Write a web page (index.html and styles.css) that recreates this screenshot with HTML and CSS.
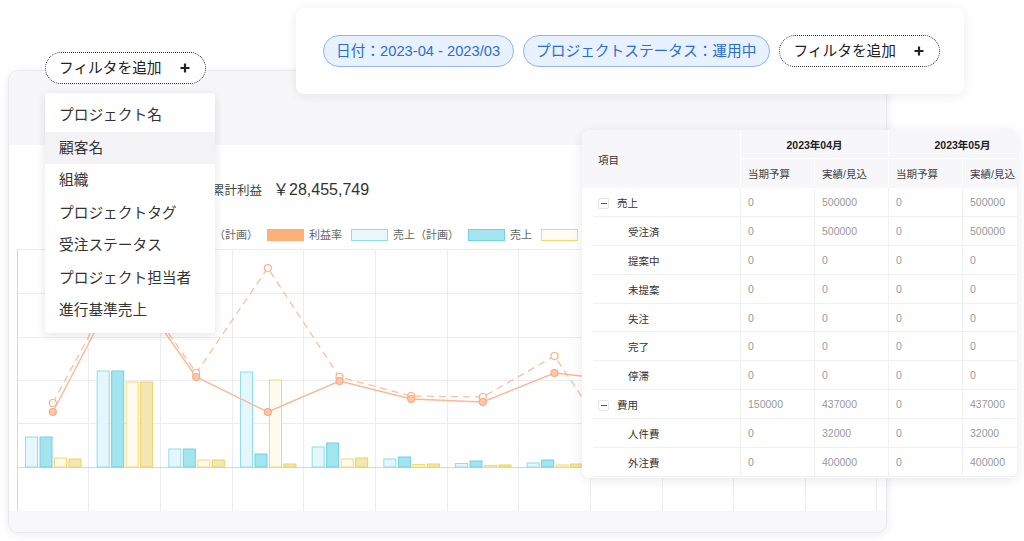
FILE: index.html
```html
<!DOCTYPE html>
<html lang="ja">
<head>
<meta charset="utf-8">
<title>レポート</title>
<link rel="stylesheet" href="styles.css">
</head>
<body>
<div class="stage">

  <section class="report">
    <div class="report-head"></div>
    <div class="summary"><span class="summary-label">累計利益</span><span class="summary-value">￥28,455,749</span></div>
    <ul class="legend">
      <li><span class="sw sw-plan-rate"></span>利益率（計画）</li>
      <li><span class="sw sw-rate"></span>利益率</li>
      <li><span class="sw sw-sales-plan"></span>売上（計画）</li>
      <li><span class="sw sw-sales"></span>売上</li>
      <li><span class="sw sw-cost-plan"></span></li>
    </ul>
    <svg class="chart" viewBox="0 0 860 262" width="860" height="262">
      <path class="gl" d="M0 0.5H860M0 44.5H860M0 88.5H860M0 131.5H860M0 174.5H860"/>
      <path class="gl" d="M71.5 0V262M143.5 0V262M215.5 0V262M286.5 0V262M358.5 0V262M430.5 0V262M501.5 0V262M573.5 0V262M645.5 0V262M716.5 0V262M788.5 0V262M859.5 0V262"/>
      <path class="axis" d="M0.5 0V262M0 218.5H860"/>

      <g transform="translate(0,0)">
        <rect class="b1" x="8.5" y="188" width="12" height="30"/>
        <rect class="b2" x="23" y="188" width="12" height="30"/>
        <rect class="b3" x="37.5" y="209" width="12" height="9"/>
        <rect class="b4" x="52" y="210" width="12" height="8"/>
      </g>
      <g transform="translate(71.67,0)">
        <rect class="b1" x="8.5" y="122" width="12" height="96"/>
        <rect class="b2" x="23" y="122" width="12" height="96"/>
        <rect class="b3" x="37.5" y="133" width="12" height="85"/>
        <rect class="b4" x="52" y="133" width="12" height="85"/>
      </g>
      <g transform="translate(143.33,0)">
        <rect class="b1" x="8.5" y="200" width="12" height="18"/>
        <rect class="b2" x="23" y="200" width="12" height="18"/>
        <rect class="b3" x="37.5" y="211" width="12" height="7"/>
        <rect class="b4" x="52" y="211" width="12" height="7"/>
      </g>
      <g transform="translate(215,0)">
        <rect class="b1" x="8.5" y="123" width="12" height="95"/>
        <rect class="b2" x="23" y="205" width="12" height="13"/>
        <rect class="b3" x="37.5" y="131" width="12" height="87"/>
        <rect class="b4" x="52" y="215" width="12" height="3"/>
      </g>
      <g transform="translate(286.67,0)">
        <rect class="b1" x="8.5" y="198" width="12" height="20"/>
        <rect class="b2" x="23" y="194" width="12" height="24"/>
        <rect class="b3" x="37.5" y="210" width="12" height="8"/>
        <rect class="b4" x="52" y="209" width="12" height="9"/>
      </g>
      <g transform="translate(358.33,0)">
        <rect class="b1" x="8.5" y="210" width="12" height="8"/>
        <rect class="b2" x="23" y="208" width="12" height="10"/>
        <rect class="b3" x="37.5" y="215.5" width="12" height="2.5"/>
        <rect class="b4" x="52" y="215" width="12" height="3"/>
      </g>
      <g transform="translate(430,0)">
        <rect class="b1" x="8.5" y="214.5" width="12" height="3.5"/>
        <rect class="b2" x="23" y="212" width="12" height="6"/>
        <rect class="b3" x="37.5" y="216.5" width="12" height="1.5"/>
        <rect class="b4" x="52" y="216" width="12" height="2"/>
      </g>
      <g transform="translate(501.67,0)">
        <rect class="b1" x="8.5" y="214" width="12" height="4"/>
        <rect class="b2" x="23" y="211" width="12" height="7"/>
        <rect class="b3" x="37.5" y="216" width="12" height="2"/>
        <rect class="b4" x="52" y="215" width="12" height="3"/>
      </g>

      <polyline class="line-plan" points="35.8,154 107.5,21 179.2,124 250.8,19 322.5,128 394.2,147 465.8,148 537.5,107 609.2,214 680.8,150 752.5,140 824.2,135"/>
      <polyline class="line-actual" points="35.8,163 107.5,26 179.2,128 250.8,163 322.5,132 394.2,150 465.8,153 537.5,124 609.2,132 680.8,140 752.5,136 824.2,130"/>

      <g class="dot-plan">
        <circle cx="35.8" cy="154" r="3.5"/><circle cx="107.5" cy="21" r="3.5"/><circle cx="179.2" cy="124" r="3.5"/><circle cx="250.8" cy="19" r="3.5"/><circle cx="322.5" cy="128" r="3.5"/><circle cx="394.2" cy="147" r="3.5"/><circle cx="465.8" cy="148" r="3.5"/><circle cx="537.5" cy="107" r="3.5"/>
      </g>
      <g class="dot-actual">
        <circle cx="35.8" cy="163" r="3.5"/><circle cx="107.5" cy="26" r="3.5"/><circle cx="179.2" cy="128" r="3.5"/><circle cx="250.8" cy="163" r="3.5"/><circle cx="322.5" cy="132" r="3.5"/><circle cx="394.2" cy="150" r="3.5"/><circle cx="465.8" cy="153" r="3.5"/><circle cx="537.5" cy="124" r="3.5"/>
      </g>
    </svg>
    <div class="report-foot"></div>
  </section>

  <button class="add-filter add-filter-left" type="button">フィルタを追加<svg class="plus" viewBox="0 0 10 10" width="10" height="10"><path d="M5 0.5V9.5M0.5 5H9.5"/></svg></button>

  <ul class="menu">
    <li>プロジェクト名</li>
    <li class="is-hover">顧客名</li>
    <li>組織</li>
    <li>プロジェクトタグ</li>
    <li>受注ステータス</li>
    <li>プロジェクト担当者</li>
    <li>進行基準売上</li>
  </ul>

  <div class="filter-bar">
    <span class="chip">日付：2023-04 - 2023/03</span>
    <span class="chip">プロジェクトステータス：運用中</span>
    <button class="add-filter" type="button">フィルタを追加<svg class="plus" viewBox="0 0 10 10" width="10" height="10"><path d="M5 0.5V9.5M0.5 5H9.5"/></svg></button>
  </div>

  <div class="table-card">
    <table class="grid">
      <colgroup><col class="c-item"><col class="c-num"><col class="c-num"><col class="c-num"><col class="c-num"></colgroup>
      <thead>
        <tr>
          <th class="th-item" rowspan="2">項目</th>
          <th class="th-month" colspan="2">2023年04月</th>
          <th class="th-month" colspan="2">2023年05月</th>
        </tr>
        <tr>
          <th class="th-sub">当期予算</th><th class="th-sub">実績/見込</th><th class="th-sub">当期予算</th><th class="th-sub">実績/見込</th>
        </tr>
      </thead>
      <tbody>
        <tr><td class="label parent"><span class="toggle"></span>売上</td><td>0</td><td>500000</td><td>0</td><td>500000</td></tr>
        <tr><td class="label child">受注済</td><td>0</td><td>500000</td><td>0</td><td>500000</td></tr>
        <tr><td class="label child">提案中</td><td>0</td><td>0</td><td>0</td><td>0</td></tr>
        <tr><td class="label child">未提案</td><td>0</td><td>0</td><td>0</td><td>0</td></tr>
        <tr><td class="label child">失注</td><td>0</td><td>0</td><td>0</td><td>0</td></tr>
        <tr><td class="label child">完了</td><td>0</td><td>0</td><td>0</td><td>0</td></tr>
        <tr><td class="label child">停滞</td><td>0</td><td>0</td><td>0</td><td>0</td></tr>
        <tr><td class="label parent"><span class="toggle"></span>費用</td><td>150000</td><td>437000</td><td>0</td><td>437000</td></tr>
        <tr><td class="label child">人件費</td><td>0</td><td>32000</td><td>0</td><td>32000</td></tr>
        <tr><td class="label child">外注費</td><td>0</td><td>400000</td><td>0</td><td>400000</td></tr>
      </tbody>
    </table>
  </div>

</div>
</body>
</html>
```

FILE: styles.css
```css
* { box-sizing: border-box; margin: 0; padding: 0; }
html, body { width: 1024px; height: 541px; overflow: hidden; background: #fff; }
body { font-family: "Liberation Sans", "Noto Sans CJK JP", sans-serif; color: #333; }
.stage { position: relative; width: 1024px; height: 541px; }

/* main report card */
.report {
  position: absolute; left: 8px; top: 70px; width: 879px; height: 463px;
  background: #fff; border: 1px solid #e8e8ed; border-radius: 10px;
  box-shadow: 0 2px 10px rgba(30, 30, 60, 0.08);
  overflow: hidden; display: flex; flex-direction: column;
}
.report-head { height: 74px; flex: none; background: #f7f7f9; }
.summary { flex: none; margin-top: 35px; height: 20px; padding-left: 203px; display: flex; align-items: baseline; line-height: 20px; white-space: nowrap; }
.summary-label { font-size: 12.5px; color: #444; }
.summary-value { font-size: 16px; margin-left: 11px; color: #333; }

.legend { flex: none; list-style: none; margin-top: 29px; height: 12px; padding-left: 130px; display: flex; gap: 9px; font-size: 11px; line-height: 12px; color: #666; white-space: nowrap; }
.legend li { display: flex; align-items: center; }
.sw { width: 37px; height: 12px; margin-right: 5px; border: 1.5px solid; flex: none; }
.sw-plan-rate { background: #fff; border-color: #fdb383; }
.sw-rate { background: #ffb079; border-color: #ffb079; }
.sw-sales-plan { background: #e9f7fc; border-color: #8ddcf0; }
.sw-sales { background: #a4e6ef; border-color: #74d4e7; }
.sw-cost-plan { background: #fffdf3; border-color: #f5d96e; }

.chart { display: block; flex: none; margin: 8px 0 0 8px; width: 860px; height: 262px; }
.report-foot { flex: 1; background: #f8f8fa; }

.gl { stroke: #ececf0; stroke-width: 1; fill: none; }
.axis { stroke: #d6d6dc; stroke-width: 1; fill: none; }
.b1 { fill: #e5f6fc; stroke: #91dcef; stroke-width: 1; }
.b2 { fill: #a3e5ef; stroke: #70d1e5; stroke-width: 1; }
.b3 { fill: #fffbef; stroke: #f6d86c; stroke-width: 1; }
.b4 { fill: #f3e7b3; stroke: #efd062; stroke-width: 1; }
.line-plan { fill: none; stroke: #fcbf9f; stroke-width: 1.3; stroke-dasharray: 7 5; }
.line-actual { fill: none; stroke: #fbb896; stroke-width: 1.4; }
.dot-plan circle { fill: #fff; stroke: #f9b08c; stroke-width: 1.2; }
.dot-actual circle { fill: #fcc6a8; stroke: #f8ab85; stroke-width: 1.2; }

/* add filter button */
.add-filter {
  height: 32px; display: flex; align-items: center; gap: 18px;
  padding: 0 15px 0 13px; border: 1px dotted #333; border-radius: 16px;
  background: #fff; font-family: inherit; font-size: 14.7px; line-height: 30px; color: #222; white-space: nowrap;
}
.add-filter-left { position: absolute; left: 45px; top: 52px; }
.plus { display: block; width: 10px; height: 10px; flex: none; }
.plus path { stroke: #222; stroke-width: 2.2; fill: none; }

/* dropdown menu */
.menu {
  position: absolute; left: 45px; top: 93px; width: 170px; height: 240px;
  list-style: none; background: #fff; padding: 6px 0; border-radius: 3px;
  box-shadow: 0 2px 10px rgba(30, 30, 60, 0.12);
}
.menu li { height: 32.5px; line-height: 32.5px; padding-left: 14px; font-size: 14.7px; color: #333; white-space: nowrap; }
.menu li.is-hover { background: #f3f3f6; }

/* filter bar */
.filter-bar {
  position: absolute; left: 296px; top: 8px; width: 668px; height: 86px;
  background: #fff; border-radius: 8px; box-shadow: 0 2px 12px rgba(30, 30, 60, 0.08);
  display: flex; align-items: center; gap: 9px; padding-left: 27px;
}
.chip {
  height: 32px; padding: 0 13px 0 12px; border: 1px solid #8fb6ee; background: #e8f1fe;
  color: #2c6dd0; border-radius: 16px; font-size: 14.7px; line-height: 30px; white-space: nowrap;
}

/* table card */
.table-card {
  position: absolute; left: 582px; top: 130px; width: 435px; height: 348px;
  background: #fff; border-radius: 8px; box-shadow: 0 2px 12px rgba(30, 30, 60, 0.1);
  overflow: hidden;
}
.grid { width: 454px; border-collapse: separate; border-spacing: 0; table-layout: fixed; font-size: 10.5px; }
.c-item { width: 158px; }
.c-num { width: 74px; }
.grid thead tr { height: 29px; }
.grid th { background: #f7f7f9; font-weight: normal; text-align: left; color: #333; white-space: nowrap; }
.grid .th-item { padding-left: 16px; }
.grid .th-month { text-align: center; font-weight: bold; color: #222; border-left: 1px solid #fff; border-bottom: 1px solid #fff; }
.grid .th-sub { padding-left: 7px; border-left: 1px solid #fff; color: #444; }
.grid tbody tr { height: 28.9px; }
.grid td { padding-left: 7px; color: #9a9a9a; border-left: 1px solid #f1f1f4; border-bottom: 1px solid #f1f1f4; white-space: nowrap; }
.grid td.label {
  color: #333; border-left: 0; border-bottom: 0;
  background: linear-gradient(#f1f1f4, #f1f1f4) no-repeat 11px 100% / calc(100% - 11px) 1px;
}
.grid .label.parent { padding-left: 16px; }
.grid .label.child { padding-left: 46px; }
.toggle {
  display: inline-flex; align-items: center; justify-content: center; vertical-align: middle;
  width: 11px; height: 11px; margin: -2px 8px 0 0; border: 1px solid #e4e4e8; border-radius: 2px; background: #fff;
}
.toggle::before { content: ""; width: 6px; height: 1px; background: #555; }
```
